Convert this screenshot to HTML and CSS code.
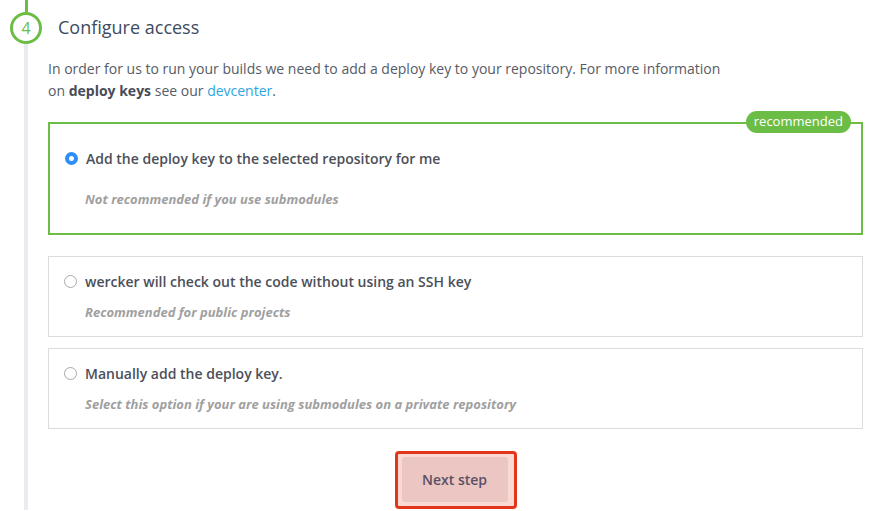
FILE: index.html
```html
<!DOCTYPE html>
<html>
<head>
<meta charset="utf-8">
<link rel="stylesheet" href="styles.css">
</head>
<body>
<div class="step">
  <div class="rail">
    <div class="rail-top"></div>
    <div class="rail-circle">4</div>
    <div class="rail-bottom"></div>
  </div>
  <div class="content">
    <h2 class="title">Configure access</h2>
    <p class="intro">In order for us to run your builds we need to add a deploy key to your repository. For more information on <strong>deploy keys</strong> see our <a class="link" href="#">devcenter</a>.</p>
    <div class="options">
      <label class="option option-recommended">
        <span class="badge">recommended</span>
        <span class="option-head"><span class="radio radio-on"></span><span class="option-label">Add the deploy key to the selected repository for me</span></span>
        <span class="option-sub">Not recommended if you use submodules</span>
      </label>
      <label class="option option-second">
        <span class="option-head"><span class="radio"></span><span class="option-label">wercker will check out the code without using an SSH key</span></span>
        <span class="option-sub">Recommended for public projects</span>
      </label>
      <label class="option">
        <span class="option-head"><span class="radio"></span><span class="option-label">Manually add the deploy key.</span></span>
        <span class="option-sub">Select this option if your are using submodules on a private repository</span>
      </label>
    </div>
    <div class="actions">
      <div class="highlight"><button class="btn">Next step</button></div>
    </div>
  </div>
</div>
</body>
</html>
```
FILE: styles.css
```css
html, body {
  margin: 0;
  padding: 0;
  background: #fff;
  font-family: "Open Sans", "Noto Sans", sans-serif;
  color: #50545e;
}
.step {
  display: flex;
  min-height: 511px;
}
.rail {
  width: 48px;
  flex: none;
  display: flex;
  flex-direction: column;
}
.rail-top {
  width: 3px;
  height: 12px;
  margin-left: 25px;
  background: #6cbd45;
}
.rail-circle {
  width: 26px;
  height: 26px;
  margin-left: 10px;
  border: 3px solid #6cbd45;
  border-radius: 50%;
  display: flex;
  align-items: center;
  justify-content: center;
  font-size: 16px;
  color: #6cbd45;
}
.rail-bottom {
  flex: 1;
  width: 4px;
  margin-left: 24px;
  margin-bottom: 1px;
  background: #e8ebef;
}
.content {
  flex: 1;
  padding-right: 11px;
}
.title {
  margin: 12px 0 0 10px;
  height: 32px;
  line-height: 30px;
  font-size: 18px;
  font-weight: 400;
  color: #3d4b61;
}
.intro {
  margin: 14px 0 0 0;
  max-width: 680px;
  font-size: 14px;
  line-height: 22px;
  color: #565b65;
}
.intro strong {
  font-weight: 700;
  color: #474c58;
}
.link {
  color: #2ea7e0;
  text-decoration: none;
}
.options {
  margin-top: 20px;
  display: flex;
  flex-direction: column;
}
.option {
  position: relative;
  display: flex;
  flex-direction: column;
  gap: 11px;
  border: 1px solid #dcdcdc;
  padding: 14px 14px 14px 15px;
}
.option-recommended {
  border: 2px solid #6cbd45;
  padding: 24px 14px 24px 14px;
  gap: 21px;
}
.option-second {
  margin-top: 21px;
  margin-bottom: 11px;
}
.badge {
  position: absolute;
  top: -13px;
  right: 10px;
  height: 22px;
  line-height: 21px;
  padding: 0 8px;
  border-radius: 11px;
  background: #6cbd45;
  color: #fff;
  font-size: 13px;
}
.option-head {
  display: flex;
  align-items: center;
  gap: 8px;
  height: 20px;
}
.radio {
  width: 11px;
  height: 11px;
  border: 1px solid #a9a9a9;
  border-radius: 50%;
  background: #fff;
  box-sizing: content-box;
}
.radio-on {
  width: 5px;
  height: 5px;
  border: 4px solid #2d8ff5;
  background: #fff;
  margin-left: 1px;
  margin-right: 0;
}
.option-label {
  font-size: 14px;
  font-weight: 600;
  color: #4b4f59;
}
.option-sub {
  display: block;
  height: 20px;
  line-height: 20px;
  padding-left: 21px;
  font-size: 13px;
  font-style: italic;
  font-weight: 700;
  color: #a0a0a0;
}
.actions {
  display: flex;
  justify-content: center;
  margin-top: 22px;
}
.highlight {
  border: 3px solid #e2361c;
  border-radius: 4px;
  background: #fbd9d3;
  padding: 3px 6px 5px 4px;
}
.btn {
  width: 106px;
  height: 44px;
  border: none;
  border-radius: 3px;
  background: #ebc6c2;
  box-shadow: 0 1px 0 rgba(0,0,0,0.08);
  font-family: "Open Sans", "Noto Sans", sans-serif;
  font-size: 14px;
  font-weight: 600;
  color: #5b5066;
  cursor: pointer;
}
```
